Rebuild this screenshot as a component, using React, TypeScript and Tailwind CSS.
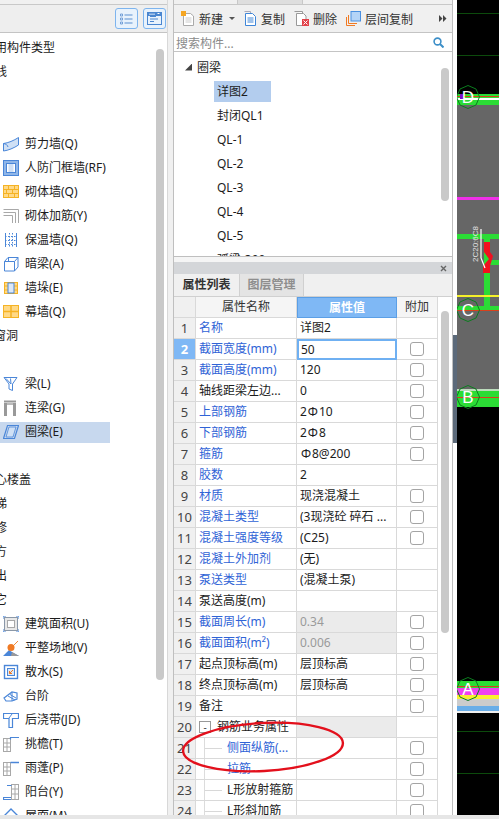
import type { ReactNode } from "react"

const font = "font-['Noto_Sans','Noto_Sans_CJK_SC',sans-serif]"

function Ico({ children, w = 16, h = 16 }: { children: ReactNode; w?: number; h?: number }) {
  return (
    <svg width={w} height={h} viewBox={`0 0 ${w} ${h}`} fill="none" className="shrink-0">
      {children}
    </svg>
  )
}

const blue = "#4a86d8"
const pale = "#cfe0f5"
const orange = "#f5b324"
const amber = "#ffd987"
const gray = "#a8a8a8"

const icons: Record<string, ReactNode> = {
  shear: <Ico><path d="M0.5 7.5C5 7 11 4.5 15.5 1.5V9C11 12 5 14.5 0.5 15Z" fill={pale} stroke={blue} /><path d="M0.5 7.5C3 8 4.5 9 5 11" stroke={blue} /></Ico>,
  door: <Ico><rect x="0.5" y="0.5" width="15" height="15" fill="#8fb6e8" stroke={blue} /><rect x="3.5" y="3.5" width="9" height="9" fill="#fff" stroke={blue} /><rect x="5.5" y="4" width="5" height="8" fill={pale} /></Ico>,
  brick: <Ico><rect x="0.5" y="1.5" width="15" height="12" fill={amber} stroke={orange} /><path d="M0 5.5H16M0 9.5H16M5.5 2V5M11.5 2V5M3.5 6V9M9.5 6V9M5.5 10V13M11.5 10V13" stroke={orange} /></Ico>,
  rebar: <Ico><path d="M0.5 1.5H15.5V15M0.5 4.5H12.5V15M0.5 7.5H9.5V15" stroke={gray} /></Ico>,
  insul: <Ico><path d="M2.5 1V15M13.5 1V15" stroke={blue} /><path d="M6.5 1V15M9.5 1V15M2 4.5H14M2 8.5H14M2 12.5H14" stroke={blue} strokeDasharray="1.5 1.5" /></Ico>,
  hidden: <Ico><path d="M1.5 5.5L5 1.5H15L11.5 5.5ZM1.5 5.5V15H11.5V5.5M11.5 15L15 11V1.5" fill="#fff" stroke={blue} /><path d="M5.5 2V5" stroke={blue} /></Ico>,
  pillar: <Ico><rect x="1.5" y="2.5" width="13" height="11" fill={amber} stroke={orange} /><path d="M1.5 6H14.5M1.5 10H14.5" stroke={orange} /><rect x="5" y="3" width="6" height="10" fill="#dce8f7" stroke={blue} /></Ico>,
  curtain: <Ico><rect x="0.5" y="1.5" width="15" height="12" fill={amber} stroke={orange} /><path d="M0 7.5H16M8 2V13" stroke={orange} strokeWidth="1.5" /></Ico>,
  beam: <Ico><path d="M1 1.5H14L9.5 8V14.5L6 13V8Z" fill="#fff" stroke={blue} /><path d="M3 2.5L8 8M7.5 2.5L8 8" stroke={blue} /></Ico>,
  link: <Ico><rect x="1" y="0.5" width="12" height="2" fill="#999" /><rect x="1" y="3" width="12" height="2" fill="#bbb" /><rect x="1" y="3" width="3" height="13" fill="#999" /><rect x="10" y="3" width="3" height="13" fill="#999" /></Ico>,
  ring: <Ico><path d="M4.5 1.5H15.5L11.5 14.5H0.5Z" stroke={blue} strokeWidth="1.2" /><path d="M6 3H13L10 13H3Z" fill={pale} stroke={blue} strokeWidth="0.8" /></Ico>,
  area: <Ico><rect x="1.5" y="1.5" width="13" height="13" fill="#e8e8e8" stroke="#8b98a8" /><rect x="4.5" y="4.5" width="7" height="7" fill="#fff" stroke="#a8a8a8" /><path d="M0 3V0H3M13 0H16V3M16 13V16H13M3 16H0V13" stroke={blue} /></Ico>,
  site: <Ico><path d="M0 16L6 10L9 12L16 16Z" fill={blue} /><path d="M9 12L16 16H8Z" fill="#999" /><path d="M6 10L15 1" stroke="#f08a3c" /><circle cx="8" cy="7.5" r="3.5" fill="#f07a24" /></Ico>,
  apron: <Ico><rect x="1.5" y="1.5" width="13" height="13" fill="#fff" stroke={blue} strokeWidth="1.4" /><rect x="4.5" y="4.5" width="7" height="7" fill="#dce8f7" stroke={blue} /><path d="M10 6L6.5 9.5M6.5 7V9.5H9" stroke="#f07a24" /></Ico>,
  step: <Ico><path d="M1 10L9 4L14 5V11L9 13H3Z" fill="#fff" stroke={blue} strokeWidth="1.2" /><path d="M5 8L12 12M7 6.5L13 10M9 4L9 13" stroke={blue} /></Ico>,
  strip: <Ico><path d="M0.5 1.5H15.5V6.5H9.5V15.5H6V6.5H0.5Z" fill="#fff" stroke={blue} strokeWidth="1.2" /><path d="M9 2L6 6" stroke={blue} /></Ico>,
  eave: <Ico><rect x="0.5" y="2.5" width="7" height="13" fill="#fff" stroke={gray} /><path d="M4 2.5V15.5M0.5 7H7.5M0.5 11H7.5" stroke={gray} /><path d="M7.5 3.5V1.5H16" stroke={blue} strokeWidth="1.2" /></Ico>,
  canopy: <Ico><rect x="0.5" y="2.5" width="7" height="13" fill="#fff" stroke={gray} /><path d="M4 2.5V15.5M0.5 7H7.5M0.5 11H7.5" stroke={gray} /><path d="M7.5 2.5H16" stroke={blue} strokeWidth="1.5" /></Ico>,
  balcony: <Ico><rect x="8.5" y="0.5" width="7" height="15" fill="#fff" stroke={gray} /><path d="M12 0.5V15.5M8.5 5H15.5M8.5 10H15.5" stroke={gray} /><path d="M4 1.5H8.5M8 13.5H0.5V15.5H8" stroke={blue} strokeWidth="1.2" /></Ico>,
  roof: <Ico><path d="M1 8L8 1L15 8" stroke={blue} strokeWidth="1.4" /></Ico>,
}

// offset pulls group labels past the left edge, the panel is scrolled sideways
const leftRows: { label?: string; offset?: number; icon?: string; active?: boolean }[] = [
  { label: "用构件类型", offset: -5 },
  { label: "线", offset: -5 },
  {},
  {},
  { label: "剪力墙(Q)", icon: "shear" },
  { label: "人防门框墙(RF)", icon: "door" },
  { label: "砌体墙(Q)", icon: "brick" },
  { label: "砌体加筋(Y)", icon: "rebar" },
  { label: "保温墙(Q)", icon: "insul" },
  { label: "暗梁(A)", icon: "hidden" },
  { label: "墙垛(E)", icon: "pillar" },
  { label: "幕墙(Q)", icon: "curtain" },
  { label: "窗洞", offset: -6 },
  {},
  { label: "梁(L)", icon: "beam" },
  { label: "连梁(G)", icon: "link" },
  { label: "圈梁(E)", icon: "ring", active: true },
  {},
  { label: "心楼盖", offset: -5 },
  { label: "梯", offset: -5 },
  { label: "修", offset: -5 },
  { label: "方", offset: -5 },
  { label: "出", offset: -5 },
  { label: "它", offset: -5 },
  { label: "建筑面积(U)", icon: "area" },
  { label: "平整场地(V)", icon: "site" },
  { label: "散水(S)", icon: "apron" },
  { label: "台阶", icon: "step" },
  { label: "后浇带(JD)", icon: "strip" },
  { label: "挑檐(T)", icon: "eave" },
  { label: "雨蓬(P)", icon: "canopy" },
  { label: "阳台(Y)", icon: "balcony" },
  { label: "屋面(M)", icon: "roof" },
]

function LeftPanel() {
  return (
    <div className="w-[168px] shrink-0 flex flex-col border-r border-[#d8d8d8] bg-white overflow-hidden">
      <div className="h-[5px] shrink-0 bg-[#f0f0f0] border-b border-[#c8c8c8]" />
      <div className="h-[28px] shrink-0 bg-[#eeeeee] border-b border-[#c4c4c4] flex items-center justify-end gap-[5px] pr-[1px]">
        <button className="w-[23px] h-[21px] rounded-[3px] border border-[#7db4ee] bg-[#e8f2fc] flex items-center justify-center">
          <svg width="13" height="12" viewBox="0 0 13 12" fill="none">
            <path d="M0.5 1H2.5V3H0.5ZM0.5 5H2.5V7H0.5ZM0.5 9H2.5V11H0.5Z" stroke="#5a8fd0" strokeWidth="0.8" />
            <path d="M4.5 2H12.5M4.5 6H12.5M4.5 10H12.5" stroke="#5a8fd0" />
          </svg>
        </button>
        <button className="w-[23px] h-[21px] rounded-[3px] border border-[#7db4ee] bg-[#e8f2fc] flex items-center justify-center">
          <svg width="15" height="13" viewBox="0 0 15 13" fill="none">
            <rect x="0" y="0" width="15" height="4" fill="#4a86d0" />
            <rect x="0.5" y="0.5" width="14" height="12" stroke="#4a86d0" />
            <path d="M3 4.5H9M3 7H11M3 9.5H7" stroke="#4a86d0" />
            <path d="M3 1.5V3M5 1.5V3M7 1.5V3M10.5 1.5H12.5" stroke="#fff" />
          </svg>
        </button>
      </div>
      <div className="flex-1 flex min-h-0">
        <div className="flex-1 min-w-0 pt-[3px] overflow-hidden">
          {leftRows.map((r, i) => (
            <div key={i} className="h-[24px] flex items-center">
              <div className={`h-[21px] flex items-center pl-[3px] ${r.active ? "w-[110px] bg-[#c7d8ee]" : "w-full"}`}>
                {r.icon && <span className="mr-[6px] flex">{icons[r.icon]}</span>}
                <span
                  className="text-[12px] leading-none whitespace-nowrap text-[#1c1c1c]"
                  style={r.offset !== undefined ? { marginLeft: r.offset - 3 } : undefined}
                >
                  {r.label}
                </span>
              </div>
            </div>
          ))}
        </div>
        <div className="w-[11px] shrink-0">
          <div className="mt-[16px] w-[8px] h-[631px] rounded-[4px] bg-[#c9c9c9]" />
        </div>
      </div>
    </div>
  )
}

function ToolBtn({ icon, label }: { icon: ReactNode; label: string }) {
  return (
    <span className="flex items-center gap-[4px] text-[12px] text-[#333]">
      {icon}
      <span className="pt-[3px]">{label}</span>
    </span>
  )
}

function Toolbar() {
  return (
    <div className="h-[28px] shrink-0 bg-[#f0f0f0] border-b border-[#c4c4c4] flex items-center pl-[7px] pr-[5px]">
      <ToolBtn
        label="新建"
        icon={<Ico w={14} h={15}><path d="M2.5 2.5H9.5L12.5 5V14.5H2.5Z" fill="#fff" stroke="#aaa" /><path d="M4.5 7H10.5M4.5 9H10.5M4.5 11H10.5" stroke="#ccc" /><rect x="0" y="0" width="5" height="5" fill="#f5a623" /></Ico>}
      />
      <span className="ml-[6px] w-0 h-0 border-x-[3px] border-x-transparent border-t-[3px] border-t-[#555]" />
      <span className="ml-[8px]">
        <ToolBtn
          label="复制"
          icon={<Ico w={14} h={15}><path d="M1.5 0.5H7.5V2" stroke="#aab" /><path d="M2.5 2.5H9.5L12.5 5.5V14.5H2.5Z" fill="#fff" stroke="#3f86d8" /><path d="M4.5 7H10.5M4.5 9H10.5M4.5 11H10.5" stroke="#3f86d8" /></Ico>}
        />
      </span>
      <span className="ml-[9px]">
        <ToolBtn
          label="删除"
          icon={<Ico w={15} h={15}><path d="M0.5 0.5H8.5V2.5M2.5 2.5H9.5L12 5V14.5H2.5Z" fill="#fff" stroke="#999" /><rect x="8" y="8" width="7" height="7" fill="#e2424a" /><path d="M9.5 9.5L13.5 13.5M13.5 9.5L9.5 13.5" stroke="#fff" /></Ico>}
        />
      </span>
      <span className="ml-[9px]">
        <ToolBtn
          label="层间复制"
          icon={<Ico w={15} h={15}><path d="M0.5 6V14.5H9M2.5 4V12.5H11" stroke="#f07a24" /><rect x="5" y="0.5" width="9.5" height="9.5" fill="#b4d4f7" stroke="#4a90e0" /></Ico>}
        />
      </span>
      <span className="ml-auto flex">
        <svg width="8" height="7" viewBox="0 0 8 7"><path d="M0 0L3.5 3.5L0 7ZM4 0L7.5 3.5L4 7Z" fill="#444" /></svg>
      </span>
    </div>
  )
}

function SearchBar() {
  return (
    <div className="h-[19px] shrink-0 bg-white border-b border-[#c4c4c4] flex items-center pl-[2px] pr-[8px]">
      <span className="text-[12px] text-[#8a8a8a] pt-[3px]">搜索构件...</span>
      <svg className="ml-auto" width="11" height="11" viewBox="0 0 11 11" fill="none">
        <circle cx="4.5" cy="4.5" r="3.4" stroke="#3d8fc8" strokeWidth="1.6" />
        <path d="M7 7L10.5 10.5" stroke="#3d8fc8" strokeWidth="2" />
      </svg>
    </div>
  )
}

const treeItems = ["详图2", "封闭QL1", "QL-1", "QL-2", "QL-3", "QL-4", "QL-5", "弧梁-300"]

function TreePanel() {
  return (
    <div className="h-[204px] shrink-0 flex bg-white overflow-hidden">
      <div className="flex-1 min-w-0 pt-[3px] text-[12px] text-[#1c1c1c]">
        <div className="h-[24px] flex items-center pl-[11px]">
          <span className="w-[7px] h-[7px] bg-[#444] [clip-path:polygon(100%_0,100%_100%,0_100%)]" />
          <span className="ml-[5px] pt-[2px]">圈梁</span>
        </div>
        {treeItems.map((t, i) => (
          <div key={t} className="h-[24px] flex items-center pl-[40px]">
            <span className={`h-[21px] flex items-center px-[3px] pt-[1px] ${i === 0 ? "w-[57px] bg-[#b3cdee]" : ""}`}>{t}</span>
          </div>
        ))}
      </div>
      <div className="w-[11px] shrink-0">
        <div className="mt-[16px] w-[8px] h-[133px] rounded-[4px] bg-[#c9c9c9]" />
      </div>
    </div>
  )
}

type Row = {
  n: number
  name: ReactNode
  value?: ReactNode
  blue?: boolean
  check?: boolean
  disabled?: boolean
  group?: boolean
  child?: boolean
}

function Bar() {
  return <span className="inline-block w-[12px] text-center text-[12px]">Φ</span>
}

const rows: Row[] = [
  { n: 1, name: "名称", value: "详图2", blue: true },
  { n: 2, name: "截面宽度(mm)", value: "50", blue: true, check: true },
  { n: 3, name: "截面高度(mm)", value: "120", blue: true, check: true },
  { n: 4, name: "轴线距梁左边...", value: "0", check: true },
  { n: 5, name: "上部钢筋", value: <>2<Bar />10</>, blue: true, check: true },
  { n: 6, name: "下部钢筋", value: <>2<Bar />8</>, blue: true, check: true },
  { n: 7, name: "箍筋", value: <><Bar />8@200</>, blue: true, check: true },
  { n: 8, name: "胶数", value: "2", blue: true },
  { n: 9, name: "材质", value: "现浇混凝土", blue: true, check: true },
  { n: 10, name: "混凝土类型", value: "(3现浇砼 碎石 ...", blue: true, check: true },
  { n: 11, name: "混凝土强度等级", value: "(C25)", blue: true, check: true },
  { n: 12, name: "混凝土外加剂", value: "(无)", blue: true },
  { n: 13, name: "泵送类型", value: "(混凝土泵)", blue: true },
  { n: 14, name: "泵送高度(m)" },
  { n: 15, name: "截面周长(m)", value: "0.34", blue: true, check: true, disabled: true },
  { n: 16, name: "截面面积(m²)", value: "0.006", blue: true, check: true, disabled: true },
  { n: 17, name: "起点顶标高(m)", value: "层顶标高", check: true },
  { n: 18, name: "终点顶标高(m)", value: "层顶标高", check: true },
  { n: 19, name: "备注", check: true },
  { n: 20, name: "钢筋业务属性", group: true },
  { n: 21, name: "侧面纵筋(...", blue: true, check: true, child: true },
  { n: 22, name: "拉筋", blue: true, check: true, child: true },
  { n: 23, name: "L形放射箍筋", check: true, child: true },
  { n: 24, name: "L形斜加筋", check: true, child: true },
]

const cell = "h-full flex items-center border-r border-b border-[#d9d9d9]"

function PropRow({ r }: { r: Row }) {
  const selected = r.n === 2
  return (
    <div className="h-[21px] flex text-[12px] leading-none whitespace-nowrap">
      <div className={`${cell} w-[22px] justify-center text-[13px] ${selected ? "bg-[#7fb8f5] text-white font-bold" : "bg-[#f0f0f0] text-[#444]"}`}>{r.n}</div>
      <div className={`${cell} w-[101px] ${r.blue ? "text-[#2f63d6]" : "text-[#1c1c1c]"}`}>
        {r.group && (
          <>
            <span className="ml-[3px] w-[12px] h-[12px] border border-[#999] bg-white flex items-center justify-center text-[10px] text-[#444]">-</span>
            <span className="ml-[6px]">{r.name}</span>
          </>
        )}
        {r.child && (
          <>
            <span className="ml-[8px] w-px h-full bg-[#dcdcdc]" />
            <span className="w-[17px] h-px bg-[#d8d8d8]" />
            <span className="ml-[5px]">{r.name}</span>
          </>
        )}
        {!r.group && !r.child && <span className="pl-[3px]">{r.name}</span>}
      </div>
      {selected ? (
        <div className="w-[100px] h-full border-2 border-[#6fb0f2] bg-white flex items-center pl-[2px] text-[#1c1c1c]">{r.value}</div>
      ) : (
        <div className={`${cell} w-[100px] pl-[3px] ${r.disabled ? "bg-[#ebebeb] text-[#9a9a9a]" : r.group ? "bg-[#ebebeb]" : "text-[#1c1c1c]"}`}>{r.value}</div>
      )}
      <div className={`${cell} w-[41px] justify-center`}>
        {r.check && <span className="w-[14px] h-[14px] rounded-[3px] border border-[#a4a4a4] bg-white" />}
      </div>
    </div>
  )
}

function PropsPanel() {
  return (
    <div className="flex-1 min-h-0 flex flex-col bg-white overflow-hidden">
      <div className="h-[12px] shrink-0 bg-[#d4d6d9] flex items-center justify-end pr-[5px]">
        <svg width="7" height="7" viewBox="0 0 7 7"><path d="M1 1L6 6M6 1L1 6" stroke="#666" strokeWidth="1.4" /></svg>
      </div>
      <div className="h-[23px] shrink-0 flex bg-[#f0f0f0] border-b border-[#d0d0d0] text-[12px] font-bold">
        <div className="w-[65px] flex items-center justify-center text-[#333]">属性列表</div>
        <div className="w-[65px] flex items-center justify-center bg-[#e4e4e4] border-x border-[#d0d0d0] text-[#8e8e8e]">图层管理</div>
      </div>
      <div className="flex-1 min-h-0 flex">
        <div className="w-[264px] shrink-0 overflow-hidden">
          <div className="h-[21px] flex text-[12px]">
            <div className={`${cell} w-[22px] bg-[#f0f0f0]`} />
            <div className={`${cell} w-[101px] justify-center bg-[#f5f5f5] text-[#333]`}>属性名称</div>
            <div className="w-[100px] h-full flex items-center justify-center bg-[#7fb8f5] border border-[#5b9fe6] text-white font-bold">属性值</div>
            <div className={`${cell} w-[41px] justify-center bg-[#f5f5f5] text-[#333]`}>附加</div>
          </div>
          {rows.map((r) => (
            <PropRow key={r.n} r={r} />
          ))}
        </div>
        <div className="flex-1">
          <div className="mt-[14px] ml-[3px] w-[8px] h-[322px] rounded-[4px] bg-[#c9c9c9]" />
        </div>
      </div>
    </div>
  )
}

function Axis({ cy, label }: { cy: number; label: string }) {
  return (
    <g>
      <polygon
        points={`11,${cy - 11.5} 19,${cy - 8} 22.5,${cy} 19,${cy + 8} 11,${cy + 11.5} 3,${cy + 8} -0.5,${cy} 3,${cy - 8}`}
        fill="none"
        stroke="#0b7d1e"
      />
      <text x="11" y={cy + 6} textAnchor="middle" fontSize="17" fill="#fff" fontFamily="Liberation Sans, sans-serif">
        {label}
      </text>
    </g>
  )
}

function Canvas() {
  return (
    <div className="flex-1 bg-black overflow-hidden">
      <svg width="42" height="815" viewBox="0 0 42 815" className="block">
        <rect x="0" y="13" width="42" height="1" fill="#0c4a0c" />
        <rect x="0" y="55" width="42" height="1" fill="#0c4a0c" />
        <rect x="0" y="94" width="42" height="313" fill="#666" />
        <rect x="0" y="94" width="42" height="11" fill="#2bdc35" />
        <rect x="0" y="96" width="42" height="1" fill="#d8401c" />
        <rect x="0" y="98" width="42" height="2" fill="#fff" />
        <rect x="3" y="94" width="4" height="5" fill="#7a10c8" />
        <rect x="0" y="197" width="42" height="3" fill="#f030e8" />
        <rect x="0" y="234" width="42" height="5" fill="#2bdc35" />
        <rect x="27" y="239" width="6" height="68" fill="#2bdc35" />
        <rect x="33" y="260" width="9" height="5" fill="#2bdc35" />
        <path d="M27 242H33V252L36 256L33 266V273H26V266L32 259L27 252Z" fill="#f01020" />
        <path d="M24 229V258L28 268" fill="none" stroke="#fff" strokeWidth="1.2" />
        <text
          transform="translate(21 262) rotate(-90)"
          fontSize="8"
          fill="#e4e4e4"
          fontFamily="Liberation Sans, sans-serif"
        >
          2C20:6C8
        </text>
        <rect x="0" y="295" width="42" height="2" fill="#f5f02a" />
        <rect x="0" y="306" width="42" height="5" fill="#2bdc35" />
        <rect x="0" y="310" width="42" height="1" fill="#d8401c" />
        <rect x="0" y="389" width="42" height="2" fill="#bcdcbc" />
        <rect x="0" y="391" width="42" height="16" fill="#2bdc35" />
        <rect x="0" y="397" width="42" height="1" fill="#d8401c" />
        <rect x="0" y="681" width="42" height="7" fill="#2bdc35" />
        <rect x="0" y="686" width="42" height="1" fill="#d8401c" />
        <rect x="0" y="688" width="42" height="7" fill="#f040f0" />
        <rect x="0" y="695" width="42" height="4" fill="#f8f030" />
        <rect x="0" y="699" width="42" height="7" fill="#cccccc" />
        <rect x="0" y="706" width="42" height="5" fill="#6aaee8" />
        <rect x="0" y="711" width="42" height="2" fill="#f0f0f0" />
        <rect x="0" y="731" width="42" height="1" fill="#0c4a0c" />
        <rect x="0" y="773" width="42" height="1" fill="#0c4a0c" />
        <Axis cy={97} label="D" />
        <Axis cy={310} label="C" />
        <Axis cy={397} label="B" />
        <Axis cy={689} label="A" />
      </svg>
    </div>
  )
}

export default function App() {
  return (
    <div className={`relative w-[499px] h-[819px] flex flex-col overflow-hidden bg-[#f0f0f0] ${font}`}>
      <div className="flex-1 min-h-0 flex">
        <LeftPanel />
        <div className="ml-[5px] w-[280px] shrink-0 flex flex-col border-x border-[#bfbfbf]">
          <div className="h-[5px] shrink-0 flex bg-[#f0f0f0] border-b border-[#c8c8c8]">
            <div className="w-[64px] border-r border-[#c8c8c8]" />
            <div className="w-[65px] bg-[#dedede] border-r border-[#c8c8c8]" />
          </div>
          <Toolbar />
          <SearchBar />
          <TreePanel />
          <div className="h-[6px] shrink-0 bg-[#f5f5f5] border-t border-[#bfbfbf]" />
          <PropsPanel />
        </div>
        <div className="w-[4px] shrink-0 bg-white">
          <div className="mt-[335px] h-[108px] bg-[#5c6a7a]" />
        </div>
        <Canvas />
      </div>
      <div className="h-[4px] shrink-0 bg-[#e6e6e6]" />
      <svg className="absolute left-[180px] top-[715px]" width="170" height="64" viewBox="0 0 170 64" fill="none">
        <ellipse cx="83" cy="32" rx="80" ry="24" transform="rotate(-3 83 32)" stroke="#e3101c" strokeWidth="2.4" />
      </svg>
    </div>
  )
}
